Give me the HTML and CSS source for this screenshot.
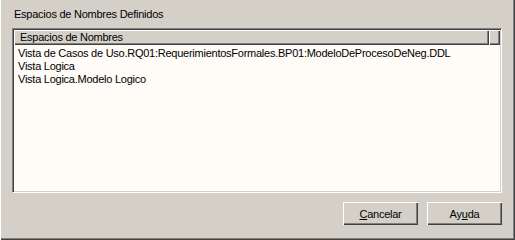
FILE: index.html
```html
<!DOCTYPE html>
<html lang="es">
<head>
  <meta charset="UTF-8" />
  <title>Espacios de Nombres Definidos</title>
  <link rel="stylesheet" href="styles.css">
</head>
<body>

<div class="dialog">
  <div class="group-title">Espacios de Nombres Definidos</div>

  <!-- List view -->
  <div class="listview">
    <div class="lv-header">
      <div class="lv-col">Espacios de Nombres</div>
      <div class="lv-rest"></div>
    </div>
    <ul class="lv-items">
      <li>Vista de Casos de Uso.RQ01:RequerimientosFormales.BP01:ModeloDeProcesoDeNeg.DDL</li>
      <li>Vista Logica</li>
      <li>Vista Logica.Modelo Logico</li>
    </ul>
  </div>

  <div class="buttons">
    <button class="btn"><u>C</u>ancelar</button>
    <button class="btn">Ay<u>u</u>da</button>
  </div>
</div>

</body>
</html>
```

FILE: styles.css
```css
body {
  margin: 0;
  padding: 0;
  background-color: #d4d0c8;
  font-family: 'Liberation Sans', Arial, sans-serif;
  font-size: 11px;
  letter-spacing: -0.25px;
  color: #000;
}

.dialog {
  width: 515px;
  height: 240px;
  box-sizing: border-box;
  padding: 8px 13px 0 11px;
  border-left: 1px solid #fff;
  box-shadow: inset -1px -1px 0 #404040, inset -2px -2px 0 #808080;
  display: flex;
  flex-direction: column;
}

.group-title {
  padding-left: 2px;
  line-height: 13px;
}

/* List view */
.listview {
  margin-top: 7px;
  height: 165px;
  box-sizing: border-box;
  background-color: #fffbf7;
  border-top: 1px solid #808080;
  border-left: 1px solid #808080;
  border-right: 1px solid #fff;
  border-bottom: 1px solid #fff;
  box-shadow: inset 1px 1px 0 #404040, inset -1px -1px 0 #d4d0c8;
  padding: 1px;
  display: flex;
  flex-direction: column;
}

.lv-header {
  display: flex;
  height: 15px;
}

.lv-col,
.lv-rest {
  box-sizing: border-box;
  background-color: #d4d0c8;
  box-shadow: inset 1px 1px 0 #fff, inset -1px -1px 0 #404040, inset -2px -2px 0 #808080;
  line-height: 14px;
}

.lv-col {
  width: 475px;
  padding-left: 6px;
}

.lv-rest {
  flex: 1;
}

.lv-items {
  list-style: none;
  margin: 0;
  padding: 2px 0 0 4px;
}

.lv-items li {
  line-height: 13px;
  white-space: nowrap;
}

/* Buttons */
.buttons {
  display: flex;
  justify-content: flex-end;
  gap: 9px;
  margin-top: 9px;
}

.btn {
  width: 75px;
  height: 23px;
  padding: 0;
  font: inherit;
  letter-spacing: inherit;
  color: #000;
  background-color: #d4d0c8;
  border: none;
  box-shadow: inset 1px 1px 0 #fff, inset -1px -1px 0 #404040, inset -2px -2px 0 #808080;
}
```
